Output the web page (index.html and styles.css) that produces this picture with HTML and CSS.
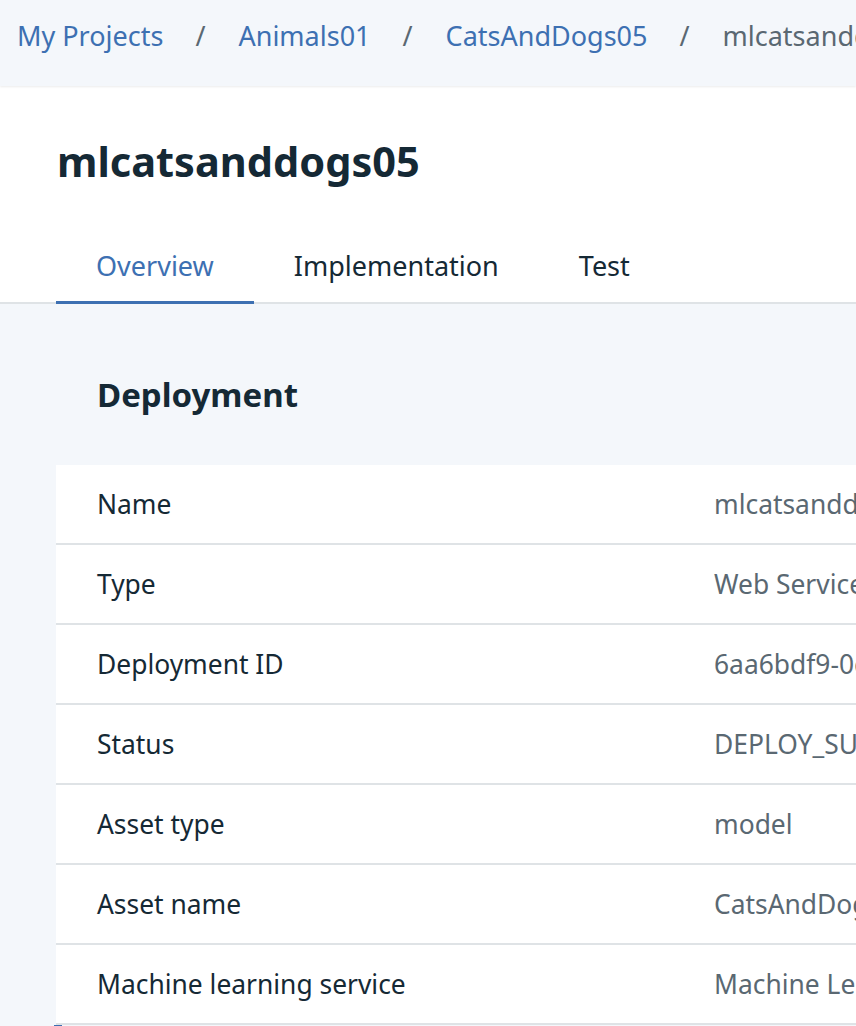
FILE: index.html
```html
<!DOCTYPE html>
<html>
<head>
<meta charset="utf-8">
<link rel="stylesheet" href="styles.css">
</head>
<body>
<nav class="crumbs">
  <a class="crumb-link">My Projects</a>
  <span class="sep">/</span>
  <a class="crumb-link">Animals01</a>
  <span class="sep">/</span>
  <a class="crumb-link">CatsAndDogs05</a>
  <span class="sep">/</span>
  <span class="crumb-current">mlcatsanddogs05</span>
</nav>
<header class="header">
  <h1 class="title">mlcatsanddogs05</h1>
  <div class="tabs">
    <div class="tab active">Overview</div>
    <div class="tab">Implementation</div>
    <div class="tab">Test</div>
  </div>
</header>
<main class="main">
  <h2 class="section-title">Deployment</h2>
  <div class="table">
    <div class="row"><div class="label">Name</div><div class="value">mlcatsanddogs05</div></div>
    <div class="row"><div class="label">Type</div><div class="value">Web Service</div></div>
    <div class="row"><div class="label">Deployment ID</div><div class="value">6aa6bdf9-0c3e-4b1a-9f2e-7d1a2c5b8e41</div></div>
    <div class="row"><div class="label">Status</div><div class="value">DEPLOY_SUCCESS</div></div>
    <div class="row"><div class="label">Asset type</div><div class="value">model</div></div>
    <div class="row"><div class="label">Asset name</div><div class="value">CatsAndDogs05</div></div>
    <div class="row"><div class="label">Machine learning service</div><div class="value">Machine Learning-xy</div></div>
  </div>
  <div class="focus-mark"></div>
</main>
</body>
</html>
```
FILE: styles.css
```css
html, body {
  margin: 0;
  padding: 0;
  overflow: hidden;
}
body {
  font-family: "Noto Sans", "Open Sans", sans-serif;
  background: #f4f7fb;
  color: #152935;
  width: 856px;
}
.crumbs {
  background: #f4f7fb;
  height: 86px;
  box-sizing: border-box;
  padding: 18px 0 0 17px;
  display: flex;
  white-space: nowrap;
  font-size: 27px;
  line-height: 36px;
  box-shadow: 0 1px 2px rgba(0,0,0,0.08);
  position: relative;
  z-index: 1;
  overflow: hidden;
}
.crumb-link { color: #3d70b2; flex: none; }
.sep { color: #5a6872; margin: 0 33px 0 32px; flex: none; }
.crumb-current { color: #5a6872; flex: none; }
.header {
  background: #fff;
  padding: 47px 0 0 0;
  border-bottom: 2px solid #dfe3e6;
}
.title {
  margin: 0 0 0 57px;
  font-size: 41.5px;
  line-height: 56px;
  font-weight: 700;
}
.tabs {
  display: flex;
  margin-left: 56px;
  margin-top: 59px;
}
.tab {
  font-size: 27px;
  line-height: 36px;
  padding: 0 40px 17px 40px;
  color: #152935;
  border-bottom: 3px solid transparent;
  margin-bottom: -2px;
}
.tab.active {
  color: #3d70b2;
  border-bottom-color: #3d70b2;
}
.main {
  padding: 69px 0 0 56px;
}
.section-title {
  margin: 0 0 48px 41px;
  font-size: 33px;
  line-height: 44px;
  font-weight: 700;
}
.table {
  background: #fff;
}
.row {
  display: grid;
  grid-template-columns: 658px 1fr;
  height: 80px;
  align-items: center;
  border-bottom: 2px solid #dfe3e6;
  box-sizing: border-box;
  font-size: 26.4px;
  white-space: nowrap;
  overflow: hidden;
}
.label { padding-left: 41px; color: #152935; }
.value { color: #5a6872; }
.focus-mark {
  width: 8px;
  height: 4px;
  margin-left: -2px;
  background: #3d70b2;
}
```
